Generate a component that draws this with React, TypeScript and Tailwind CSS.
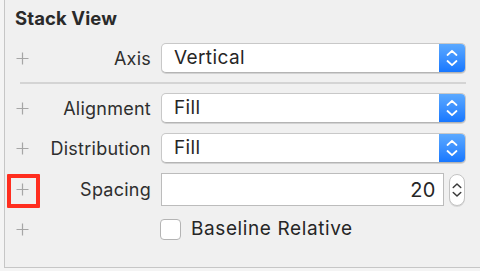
import React from "react";

const font = { fontFamily: "Inter, 'Liberation Sans', sans-serif" };

function Plus() {
  return (
    <svg width="13" height="13" viewBox="0 0 13 13" className="shrink-0">
      <path d="M6.5 0.5V12.5M0.5 6.5H12.5" stroke="#a6a6a6" strokeWidth="1.2" />
    </svg>
  );
}

function Chevrons({ color, w = 12 }: { color: string; w?: number }) {
  return (
    <svg width={w} height="18" viewBox="0 0 12 18">
      <path d="M1.5 6L6 1.8L10.5 6" fill="none" stroke={color} strokeWidth="1.8" strokeLinecap="round" strokeLinejoin="round" />
      <path d="M1.5 12L6 16.2L10.5 12" fill="none" stroke={color} strokeWidth="1.8" strokeLinecap="round" strokeLinejoin="round" />
    </svg>
  );
}

function Popup({ value }: { value: string }) {
  return (
    <div className="flex h-[30px] w-[305px] rounded-[5px] border border-[#c8c8c8] border-b-[#b4b4b4] bg-white shadow-[0_1px_0.5px_rgba(0,0,0,0.12)] overflow-hidden">
      <div className="flex-1 flex items-center pl-[12px] text-[19px] tracking-[0.4px] text-[#262626]">{value}</div>
      <div className="w-[26px] flex items-center justify-center bg-gradient-to-b from-[#5ba9ff] to-[#1677ff]">
        <Chevrons color="#ffffff" />
      </div>
    </div>
  );
}

function Row({ label, children, h = "h-[30px]" }: { label: string; children: React.ReactNode; h?: string }) {
  return (
    <div className={`flex items-center ${h}`}>
      <div className="ml-[11px] w-[13px] flex items-center"><Plus /></div>
      <div className="w-[122px] text-right text-[18px] tracking-[0.25px] text-[#2e2e2e]">{label}</div>
      <div className="ml-[10px] flex items-center">{children}</div>
    </div>
  );
}

export default function App() {
  return (
    <div className="w-[480px] h-[271px] bg-[#f4f4f4] overflow-hidden" style={font}>
      <div className="relative ml-[4px] h-[268px] border-l border-b border-[#c6c6c6] bg-[#f0f0f0]">
        <div className="h-[36px] pl-[10px] pt-[4px] text-[18.5px] font-bold tracking-[0.1px] text-[#2a2a2a] leading-[28px]">Stack View</div>
        <div className="mt-[7px]">
          <Row label="Axis"><Popup value="Vertical" /></Row>
        </div>
        <div className="mt-[9px] ml-[15px] w-[446px] h-[2px] bg-[#d4d4d4]" />
        <div className="mt-[9px]">
          <Row label="Alignment"><Popup value="Fill" /></Row>
        </div>
        <div className="mt-[10px]">
          <Row label="Distribution"><Popup value="Fill" /></Row>
        </div>
        <div className="mt-[10px]">
          <Row label="Spacing" h="h-[33px]">
            <div className="flex items-center">
              <div className="w-[283px] h-[33px] border border-[#bcbcbc] bg-white flex items-center justify-end pr-[7px] text-[20px] tracking-[0.5px] text-[#262626]">20</div>
              <div className="ml-[5px] w-[16px] h-[32px] rounded-full border border-[#c4c4c4] bg-white flex items-center justify-center shadow-[0_1px_0.5px_rgba(0,0,0,0.1)]">
                <Chevrons color="#3a3a3a" w={10} />
              </div>
            </div>
          </Row>
        </div>
        <div className="mt-[12px] flex items-center h-[22px]">
          <div className="ml-[11px] w-[13px] flex items-center"><Plus /></div>
          <div className="ml-[131px] w-[21px] h-[21px] rounded-[4px] border border-[#b4b4b4] bg-white" />
          <div className="ml-[10px] text-[19px] tracking-[0.6px] text-[#262626]">Baseline Relative</div>
        </div>
        <div className="absolute left-[2px] top-[174px] w-[33px] h-[34px] border-[4px] border-[#ff2e1f] rounded-[1px]" />
      </div>
    </div>
  );
}
